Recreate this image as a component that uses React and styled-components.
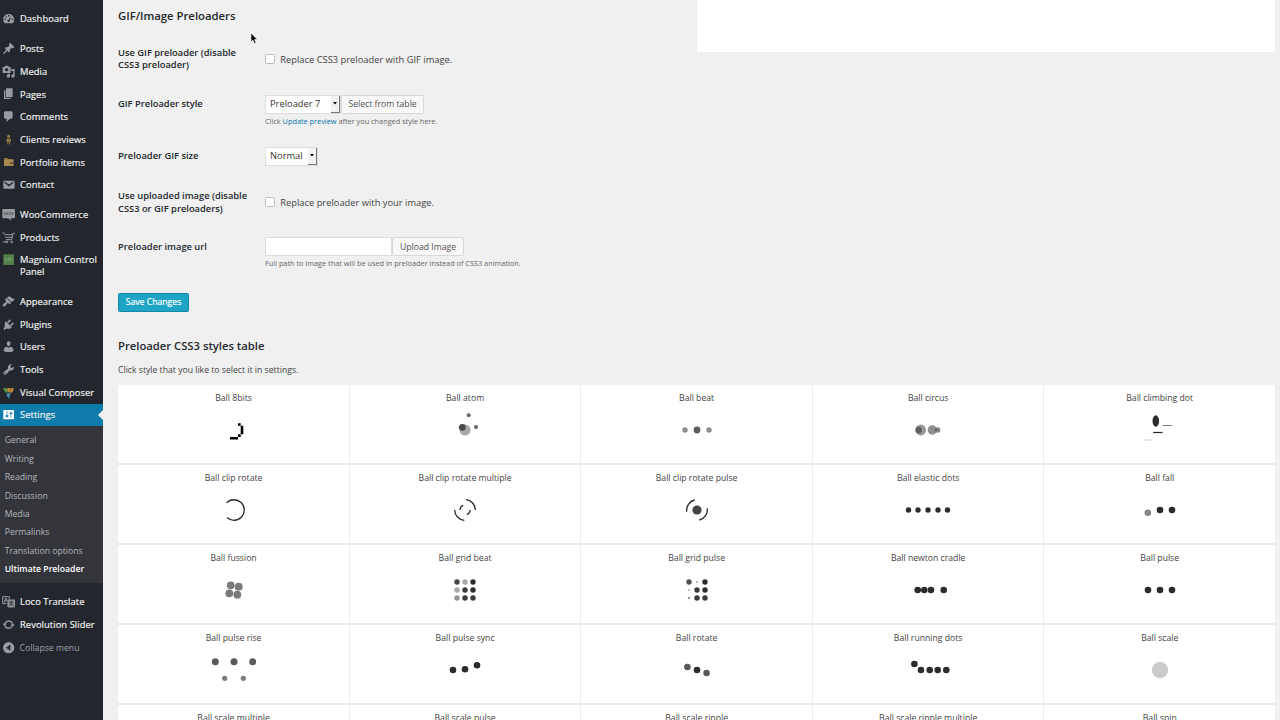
import React from "react";
import styled, { createGlobalStyle } from "styled-components";

const GlobalStyle = createGlobalStyle`
  * {
    box-sizing: border-box;
  }
  body {
    margin: 0;
    background-color: #f0f0f0;
    font-family: "Open Sans", "Liberation Sans", sans-serif;
    color: #444;
    overflow: hidden;
  }
`;

const icons = {
  dashboard:
    "M3.76 17h12.48c1.34-1.63 2.01-3.55 2.01-5.74 0-4.53-3.69-8.2-8.25-8.2s-8.25 3.67-8.25 8.2C1.75 13.45 2.42 15.37 3.76 17zM9 4.6h2v2H9zM5.3 6.3h2v2h-2zM3.5 10.2h2v2h-2zM14.5 10.2h2v2h-2zM13.9 6.2l-2.4 6.3c.4 1.6-.5 2.5-1.5 2.5s-2.1-1-1.7-2.3c.2-.7.8-1.1 1.5-1.2z",
  post: "M10.44 3.02l1.82-1.82 6.36 6.35-1.83 1.82c-1.05-.68-2.48-.57-3.41.36l-.75.75c-.92.93-1.04 2.35-.35 3.41l-1.83 1.82-2.41-2.41-2.8 2.79c-.42.42-3.38 2.71-3.8 2.29s1.86-3.39 2.28-3.81l2.79-2.79L4.1 9.36l1.83-1.82c1.05.69 2.48.57 3.4-.36l.75-.75c.93-.92 1.05-2.35.36-3.41z",
  media:
    "M13 11V4c0-.55-.45-1-1-1h-1.67L9 1H5L3.67 3H2c-.55 0-1 .45-1 1v7c0 .55.45 1 1 1h10c.55 0 1-.45 1-1zM7 4.5c1.38 0 2.5 1.12 2.5 2.5S8.38 9.5 7 9.5 4.5 8.38 4.5 7 5.62 4.5 7 4.5zM14 6h5v10.5c0 1.38-1.12 2.5-2.5 2.5S14 17.88 14 16.5s1.12-2.5 2.5-2.5c.17 0 .34.02.5.05V9h-3V6zm-4 8.05V13h2v3.5c0 1.38-1.12 2.5-2.5 2.5S7 17.88 7 16.5 8.12 14 9.5 14c.17 0 .34.02.5.05z",
  page: "M6 15V2h10v13H6zm-1 1h8v2H3V5h2v11z",
  comment:
    "M5 2h9c1.1 0 2 .9 2 2v7c0 1.1-.9 2-2 2h-2l-5 5v-5H5c-1.1 0-2-.9-2-2V4c0-1.1.9-2 2-2z",
  email:
    "M3.87 4h13.25C18.37 4 19 4.59 19 5.79v8.42c0 1.19-.63 1.79-1.88 1.79H3.87c-1.25 0-1.88-.6-1.88-1.79V5.79c0-1.2.63-1.79 1.88-1.79zm6.62 8.6l6.74-5.53c.24-.2.43-.66.13-1.07-.29-.41-.82-.42-1.17-.17l-5.7 3.86L4.8 5.83c-.35-.25-.88-.24-1.17.17-.3.41-.11.87.13 1.07z",
  appearance:
    "M14.48 11.06L7.41 3.99l1.5-1.5c.5-.56 2.3-.47 3.51.32 1.21.8 1.43 1.28 2.91 2.1 1.18.64 2.45 1.26 4.45.85zm-.71.71L6.7 4.7 4.93 6.47c-.39.39-.39 1.02 0 1.41l1.06 1.06c.39.39.39 1.03 0 1.42-.6.6-1.43 1.11-2.21 1.69-.35.26-.7.53-1.01.84C1.43 14.23.4 16.08 1.4 17.07c.99 1 2.84-.03 4.18-1.36.31-.31.58-.66.85-1.02.57-.78 1.08-1.61 1.69-2.21.39-.39 1.02-.39 1.41 0l1.06 1.06c.39.39 1.02.39 1.41 0z",
  plugins:
    "M13.11 4.36L9.87 7.6 8 5.73l3.24-3.24c.35-.34 1.05-.2 1.56.32.52.51.66 1.21.31 1.55zm-8 1.77l.91-1.12 9.01 9.01-1.19.84c-.71.71-2.63 1.16-3.82 1.16H6.14L4.9 17.26c-.59.59-1.54.59-2.12 0-.59-.58-.59-1.53 0-2.12l1.24-1.24v-3.88c0-1.13.4-3.19 1.09-3.89zm7.26 3.97l3.24-3.24c.34-.35 1.04-.21 1.55.31.52.51.66 1.21.31 1.55l-3.24 3.25z",
  users:
    "M10 9.25c-2.27 0-2.73-3.44-2.73-3.44C7 4.02 7.82 2 9.97 2c2.16 0 2.98 2.02 2.71 3.81 0 0-.41 3.44-2.68 3.44zm0 2.57L12.72 10c2.39 0 4.52 2.33 4.52 4.53v2.49s-3.65 1.13-7.24 1.13c-3.65 0-7.24-1.13-7.24-1.13v-2.49c0-2.25 1.94-4.48 4.47-4.48z",
  tools:
    "M16.68 9.77c-1.34 1.34-3.3 1.67-4.95.99l-5.41 6.52c-.99.99-2.59.99-3.58 0s-.99-2.59 0-3.57l6.52-5.42c-.68-1.65-.35-3.61.99-4.95 1.28-1.28 3.12-1.62 4.72-1.06l-2.89 2.89 2.82 2.82 2.86-2.87c.53 1.58.18 3.39-1.08 4.65zM3.81 16.21c.4.39 1.04.39 1.43 0 .4-.4.4-1.04 0-1.43-.39-.4-1.03-.4-1.43 0-.39.39-.39 1.03 0 1.43z",
  settings:
    "M18 16V4c0-.55-.45-1-1-1H3c-.55 0-1 .45-1 1v12c0 .55.45 1 1 1h14c.55 0 1-.45 1-1zM8 11h1c.55 0 1 .45 1 1s-.45 1-1 1H8v1.5c0 .28-.22.5-.5.5s-.5-.22-.5-.5V13H6c-.55 0-1-.45-1-1s.45-1 1-1h1V5.5c0-.28.22-.5.5-.5s.5.22.5.5V11zm5-2h-1c-.55 0-1-.45-1-1s.45-1 1-1h1V5.5c0-.28.22-.5.5-.5s.5.22.5.5V7h1c.55 0 1 .45 1 1s-.45 1-1 1h-1v5.5c0 .28-.22.5-.5.5s-.5-.22-.5-.5V9z",
  collapse:
    "M10 1.5a8.5 8.5 0 100 17 8.5 8.5 0 000-17zM12.6 5.2v9.6L6 10z",
};

// icons that are not a single flat shape
const drawings = {
  clients: (
    <g fill="#8f7446">
      <circle cx="10" cy="5.200" r="2.400" />
      <path d="M6.500 8.500h7v4h-1.400v4.800h-1.500v-3.500h-1.200v3.500H7.900v-4.800H6.500z" />
    </g>
  ),
  portfolio: (
    <g>
      <path d="M3 4.500h5l1.500 1.700h7V9H3z" fill="#8d7440" />
      <path d="M3 7.200h14.500v9.300H3z" fill="#a88a50" />
      <path d="M12.500 10.500h5v2.700h-5z" fill="#5c4f36" />
    </g>
  ),
  woo: (
    <g>
      <path d="M2 1.5h16a1.5 1.5 0 011.5 1.5v11a1.5 1.5 0 01-1.5 1.5h-5l1 3.5-4.5-3.5H2A1.5 1.5 0 01.5 14V3A1.5 1.5 0 012 1.5z" fill="#989b9f" />
      <path d="M3 6l1.4 4.5L6 7l1.5 3.500L8.800 6" fill="none" stroke="#5b5e63" strokeWidth="1.2" />
      <ellipse cx="11.7" cy="8.3" rx="1.4" ry="2" fill="none" stroke="#5b5e63" strokeWidth="1.2" />
      <ellipse cx="15.8" cy="8.3" rx="1.4" ry="2" fill="none" stroke="#5b5e63" strokeWidth="1.2" />
    </g>
  ),
  cart: (
    <g fill="none" stroke="#989b9f" strokeWidth="1.5">
      <path d="M.5 3h3.500M1 16.500h6M16 3.500h3.500M16.500 3.500L14.500 13H5.500M3.500 5.500H16M4.500 9.500H15" />
      <circle cx="7.500" cy="16.500" r="1.4" />
      <circle cx="14.500" cy="16.500" r="1.4" />
    </g>
  ),
  magnium: (
    <g>
      <path d="M2 2h16v16H2z" fill="#557f49" />
      <path d="M5 13V7l3 4 3-4v6M13 13V7h3" fill="none" stroke="#7fa06f" strokeWidth="1.2" />
    </g>
  ),
  composer: (
    <g>
      <path d="M1 3.5l6-.5 2 5-3 3z" fill="#568f43" />
      <path d="M8 3h4l1 4-3 3-2-3z" fill="#c08a35" />
      <path d="M13 3.5l5-.5-2 6-4 2z" fill="#c08a35" />
      <path d="M8 10l5 1-2.5 8L7 14z" fill="#3f86a7" />
    </g>
  ),
  loco: (
    <g fill="none" stroke="#989b9f" strokeWidth="1.5">
      <path d="M11 6V2.500H1V13h6" />
      <path d="M3.300 11L5.500 4.800h1L8 8.500M4.300 8.800h3" />
      <path d="M9 7.500h10v10.500H9z" fill="#85888d" />
      <path d="M10.800 10.500h6.500M14 9v1.500M16 11l-4.800 5.300M12.200 11.500l4.800 4.800" stroke="#23282d" strokeWidth="1.2" />
    </g>
  ),
  revolution: (
    <g fill="none" stroke="#989b9f" strokeWidth="2.200">
      <path d="M4.500 8A6.300 6.300 0 0115.600 7.800M15.500 12A6.300 6.300 0 014.400 12.200" />
      <path d="M.8 8.200h6.600L4 12.800zM12.600 11.800h6.600L16 7.200z" fill="#989b9f" stroke="none" />
    </g>
  ),
};

const menuGroups = [
  [{ name: "Dashboard", icon: "dashboard" }],
  [
    { name: "Posts", icon: "post" },
    { name: "Media", icon: "media" },
    { name: "Pages", icon: "page" },
    { name: "Comments", icon: "comment" },
    { name: "Clients reviews", icon: "clients" },
    { name: "Portfolio items", icon: "portfolio" },
    { name: "Contact", icon: "email" },
  ],
  [
    { name: "WooCommerce", icon: "woo" },
    { name: "Products", icon: "cart" },
    { name: "Magnium Control Panel", icon: "magnium" },
  ],
  [
    { name: "Appearance", icon: "appearance" },
    { name: "Plugins", icon: "plugins" },
    { name: "Users", icon: "users" },
    { name: "Tools", icon: "tools" },
    { name: "Visual Composer", icon: "composer" },
    {
      name: "Settings",
      icon: "settings",
      active: true,
      children: [
        "General",
        "Writing",
        "Reading",
        "Discussion",
        "Media",
        "Permalinks",
        "Translation options",
        "Ultimate Preloader",
      ],
    },
  ],
  [
    { name: "Loco Translate", icon: "loco" },
    { name: "Revolution Slider", icon: "revolution" },
  ],
];

const DARK = "#2b2b2b";

// [x, y, radius, colour] measured from the middle of the loader
const dots = (list) =>
  list.map(([x, y, r, fill = DARK], i) => (
    <circle key={i} cx={x} cy={y} r={r} fill={fill} />
  ));

const arcs = (d) => (
  <path d={d} fill="none" stroke={DARK} strokeWidth="1.35" />
);

const loaders = [
  {
    name: "Ball 8bits",
    art: (
      <path
        d="M-4 7H4V4.300H6.700V-4.300H4V-6.700H6.700V-4.300H9.300V4.300H6.700V7H4V9.500H-4z"
        fill="#000"
        fillRule="evenodd"
      />
    ),
  },
  {
    name: "Ball atom",
    art: dots([
      [0, 0, 5.5, "#a9a9a9"],
      [-2.7, -2.7, 3.4, "#4a4a4a"],
      [3.7, -14.7, 2, "#666"],
      [11, -3, 2, "#666"],
    ]),
  },
  {
    name: "Ball beat",
    art: dots([
      [-12, 0, 2.7, "#8e8e8e"],
      [0, 0, 3.4, "#5c5c5c"],
      [12, 0, 2.7, "#8e8e8e"],
    ]),
  },
  {
    name: "Ball circus",
    art: dots([
      [-7.3, 0, 5.4, "#979797"],
      [-9.3, 0, 3.2, "#5e5e5e"],
      [4.3, 0, 4.7, "#8e8e8e"],
      [9.7, 0, 2.7, "#858585"],
      [7.8, 0, 1.2, "#5e5e5e"],
    ]),
  },
  {
    name: "Ball climbing dot",
    art: (
      <g>
        <ellipse cx="-4.200" cy="-9" rx="3.300" ry="5.700" fill={DARK} />
        <path d="M-6.800 2.500h9.300" stroke="#222" strokeWidth="1.2" />
        <path d="M2.800 -4.500h9" stroke="#777" strokeWidth="1" />
        <path d="M-15.500 10h8" stroke="#d5d5d5" strokeWidth="1.2" />
      </g>
    ),
  },
  {
    name: "Ball clip rotate",
    art: arcs("M-7.400 -7.200A10.300 10.300 0 1 1 -7 7.600"),
  },
  {
    name: "Ball clip rotate multiple",
    art: arcs(
      "M1 -10.300A10.300 10.300 0 0 1 10.300 0M-10.300 0A10.300 10.300 0 0 0 -.7 10.300M-5 0A5 5 0 0 1 -1.700 -4.700M5 0A5 5 0 0 1 1.700 4.700"
    ),
  },
  {
    name: "Ball clip rotate pulse",
    art: (
      <g>
        {arcs(
          "M-10.200 1.700A10.300 10.300 0 0 1 -2.300 -10M10.200 -1.700A10.300 10.300 0 0 1 2.300 10"
        )}
        {dots([[0, 0, 4.6, "#444"]])}
      </g>
    ),
  },
  {
    name: "Ball elastic dots",
    art: dots([-19.5, -10, 0, 10, 19.5].map((x) => [x, 0, 2.7])),
  },
  {
    name: "Ball fall",
    art: dots([
      [-12.2, 2.7, 3.3, "#858585"],
      [0, 0, 3.3],
      [12, 0, 3.3],
    ]),
  },
  {
    name: "Ball fussion",
    art: dots([
      [-3.3, -4.7, 3.9, "#7b7b7b"],
      [4.7, -3.3, 3.9, "#7b7b7b"],
      [-4.7, 3.3, 3.9, "#7b7b7b"],
      [3.3, 4.7, 3.9, "#7b7b7b"],
    ]),
  },
  {
    name: "Ball grid beat",
    art: dots([
      [-8, -8, 2.7, "#444"],
      [0, -8, 2.7, "#a8a8a8"],
      [8, -8, 2.7],
      [-8, 0, 2.7, "#a8a8a8"],
      [0, 0, 2.7, "#3a3a3a"],
      [8, 0, 2.7],
      [-8, 8, 2.7, "#959595"],
      [0, 8, 2.7, "#3a3a3a"],
      [8, 8, 2.7, "#3a3a3a"],
    ]),
  },
  {
    name: "Ball grid pulse",
    art: dots([
      [-8, -8, 2.7, "#505050"],
      [0, -8, 1.1, "#aaa"],
      [8, -8, 2.7],
      [-8, 0, 1.1, "#aaa"],
      [0, 0, 2.7, "#3a3a3a"],
      [8, 0, 2.7],
      [-8, 8, 1.3, "#999"],
      [0, 8, 2.7, "#3a3a3a"],
      [8, 8, 2.7, "#3a3a3a"],
    ]),
  },
  {
    name: "Ball newton cradle",
    art: dots([-10.3, -3.7, 3, 15.7].map((x) => [x, 0, 3.3])),
  },
  {
    name: "Ball pulse",
    art: dots([-12, 0, 12].map((x) => [x, 0, 3.3])),
  },
  {
    name: "Ball pulse rise",
    art: dots([
      [-18.7, -8.3, 3.5, "#5a5a5a"],
      [0, -8.3, 3.5, "#5a5a5a"],
      [18.7, -8.3, 3.5, "#5a5a5a"],
      [-9.3, 8.3, 2.6, "#7b7b7b"],
      [9.3, 8.3, 2.6, "#7b7b7b"],
    ]),
  },
  {
    name: "Ball pulse sync",
    art: dots([
      [-12, 0, 3.3],
      [0, -0.7, 3.3],
      [12, -4.7, 3.3],
    ]),
  },
  {
    name: "Ball rotate",
    art: dots([
      [-9.6, -3, 3.3, "#5a5a5a"],
      [0, 0, 3.3],
      [9.6, 3, 3.3, "#5a5a5a"],
    ]),
  },
  {
    name: "Ball running dots",
    art: dots([
      [-13.6, -6, 3.3],
      [-7, 0, 3.3],
      [1.7, 0, 3.3],
      [9.7, 0, 3.3],
      [18.3, 0, 3.3],
    ]),
  },
  { name: "Ball scale", art: dots([[0, 0, 8.2, "#cbcbcb"]]) },
  { name: "Ball scale multiple" },
  { name: "Ball scale pulse" },
  { name: "Ball scale ripple" },
  { name: "Ball scale ripple multiple" },
  { name: "Ball spin" },
];

function MenuIcon({ icon }) {
  return (
    <IconSvg viewBox="0 0 20 20">
      {drawings[icon] || <path d={icons[icon]} fillRule="evenodd" />}
    </IconSvg>
  );
}

function Sidebar() {
  return (
    <Menu>
      {menuGroups.map((group, i) => (
        <MenuGroup key={i}>
          {group.map((item) => (
            <li key={item.name}>
              <MenuLink $active={item.active}>
                <MenuIcon icon={item.icon} />
                <span>{item.name}</span>
              </MenuLink>
              {item.children && (
                <SubMenu>
                  {item.children.map((name) => (
                    <SubItem key={name} $current={name === "Ultimate Preloader"}>
                      {name}
                    </SubItem>
                  ))}
                </SubMenu>
              )}
            </li>
          ))}
        </MenuGroup>
      ))}
      <Collapse>
        <MenuIcon icon="collapse" />
        <span>Collapse menu</span>
      </Collapse>
    </Menu>
  );
}

function Select({ value, width }) {
  return (
    <SelectBox $width={width}>
      <span>{value}</span>
      <SelectArrow>
        <svg width="4" height="3" viewBox="0 0 4 3">
          <path d="M0 0h4L2 2.500z" />
        </svg>
      </SelectArrow>
    </SelectBox>
  );
}

export default function App() {
  return (
    <Page>
      <GlobalStyle />
      <Sidebar />
      <Content>
        <Top>
          <Form>
            <Heading>GIF/Image Preloaders</Heading>
            <FormRow $height={51.4}>
              <Label>
                Use GIF preloader (disable
                <br />
                CSS3 preloader)
              </Label>
              <Field $top={19.4}>
                <CheckLabel>
                  <Checkbox />
                  Replace CSS3 preloader with GIF image.
                </CheckLabel>
              </Field>
            </FormRow>
            <FormRow $height={52.1}>
              <Label>GIF Preloader style</Label>
              <Field $top={10}>
                <Controls>
                  <Select value="Preloader 7" width={76} />
                  <Button $width={82.5}>Select from table</Button>
                </Controls>
                <Description>
                  Click <a>Update preview</a> after you changed style here.
                </Description>
              </Field>
            </FormRow>
            <FormRow $height={40}>
              <Label>Preloader GIF size</Label>
              <Field $top={10}>
                <Select value="Normal" width={53} />
              </Field>
            </FormRow>
            <FormRow $height={50.5}>
              <Label>
                Use uploaded image (disable
                <br />
                CSS3 or GIF preloaders)
              </Label>
              <Field $top={18.8}>
                <CheckLabel>
                  <Checkbox />
                  Replace preloader with your image.
                </CheckLabel>
              </Field>
            </FormRow>
            <FormRow $height={65}>
              <Label>Preloader image url</Label>
              <Field $top={9.7}>
                <Controls>
                  <TextInput />
                  <Button $width={71.5}>Upload Image</Button>
                </Controls>
                <Description>
                  Full path to image that will be used in preloader instead of
                  CSS3 animation.
                </Description>
              </Field>
            </FormRow>
            <SaveButton>Save Changes</SaveButton>
          </Form>
          <Preview />
        </Top>
        <TableHeading>Preloader CSS3 styles table</TableHeading>
        <Hint>Click style that you like to select it in settings.</Hint>
        <Grid>
          {loaders.map((loader) => (
            <Cell key={loader.name}>
              <CellTitle>{loader.name}</CellTitle>
              <LoaderSvg viewBox="-32 -24 64 48">{loader.art}</LoaderSvg>
            </Cell>
          ))}
        </Grid>
      </Content>
      <Cursor viewBox="0 0 8 13">
        <path
          d="M1 1v9l2-1.900 1.500 3.400 1.500-.7L4.600 7.600h2.600z"
          fill="#000"
          stroke="#fff"
          strokeWidth=".6"
        />
      </Cursor>
    </Page>
  );
}

const Page = styled.div`
  display: flex;
  height: 720px;
  overflow: hidden;
`;

const Menu = styled.nav`
  flex: 0 0 103px;
  display: flex;
  flex-direction: column;
  gap: 7.2px;
  padding-top: 7.6px;
  background-color: #23262c;
`;

const MenuGroup = styled.ul`
  margin: 0;
  padding: 0;
  list-style: none;
`;

const IconSvg = styled.svg`
  flex: none;
  width: 13.3px;
  height: 13.3px;
  fill: #989b9f;
`;

const MenuLink = styled.a`
  position: relative;
  display: flex;
  gap: 5.2px;
  min-height: 22.67px;
  padding: 4.7px 0 4.6px 1.5px;
  font-size: 9.33px;
  font-weight: 500;
  line-height: 12.1px;
  letter-spacing: 0.08px;
  -webkit-text-stroke: 0.2px;
  color: #eee;
  background-color: ${({ $active }) => ($active ? "#0d7cab" : "transparent")};
  span {
    padding-top: 1.1px;
  }
  svg {
    ${({ $active }) => $active && "fill: #fff;"}
  }
  &::after {
    content: "";
    display: ${({ $active }) => ($active ? "block" : "none")};
    position: absolute;
    right: 0;
    top: 6px;
    border: 5.3px solid transparent;
    border-right-color: #f0f0f0;
    border-left: none;
  }
`;

const SubMenu = styled.ul`
  margin: 0;
  padding: 5.2px 0 4.5px;
  list-style: none;
  background-color: #33353b;
`;

const SubItem = styled.li`
  padding-left: 4.7px;
  font-size: 8.67px;
  line-height: 18.4px;
  font-weight: ${({ $current }) => ($current ? 600 : 400)};
  color: ${({ $current }) => ($current ? "#fff" : "#b4b6b9")};
`;

const Collapse = styled.div`
  display: flex;
  align-items: center;
  gap: 4.8px;
  margin-top: -4.2px;
  padding-left: 1.5px;
  font-size: 8.67px;
  line-height: 18px;
  color: #9da0a4;
`;

const Content = styled.main`
  flex: 1;
  min-width: 0;
  padding: 0 5px 0 15px;
`;

const Top = styled.div`
  display: flex;
  justify-content: space-between;
  height: 312px;
`;

const Form = styled.div`
  width: 560px;
`;

const Preview = styled.div`
  width: 578px;
  height: 52px;
  background-color: #fff;
`;

const Heading = styled.h3`
  margin: 0;
  height: 33.6px;
  padding-top: 8.4px;
  font-size: 11.3px;
  font-weight: 600;
  line-height: 16px;
  color: #23282d;
`;

const FormRow = styled.div`
  display: flex;
  height: ${({ $height }) => $height}px;
`;

const Label = styled.div`
  flex: 0 0 147px;
  padding-top: 13.4px;
  font-size: 9.33px;
  font-weight: 600;
  line-height: 12.1px;
  color: #23282d;
`;

const Field = styled.div`
  padding-top: ${({ $top }) => $top}px;
`;

const CheckLabel = styled.label`
  display: flex;
  align-items: center;
  gap: 5px;
  font-size: 9.33px;
  line-height: 13px;
`;

const Checkbox = styled.span`
  width: 10.3px;
  height: 10px;
  border: 1px solid #bbb;
  border-radius: 1.5px;
  background-color: #fff;
`;

const Controls = styled.div`
  display: flex;
  align-items: center;
  gap: 0.3px;
`;

const SelectBox = styled.div`
  display: flex;
  align-items: center;
  justify-content: space-between;
  width: ${({ $width }) => $width}px;
  height: 18.5px;
  padding-left: 4px;
  border: 1px solid #ddd;
  background-color: #fff;
  font-size: 9.33px;
  line-height: 16px;
  color: #333;
`;

const SelectArrow = styled.span`
  display: flex;
  align-items: center;
  justify-content: center;
  width: 9px;
  height: 16.5px;
  border-right: 1px solid #777;
  border-bottom: 1px solid #777;
  background-color: #f2f2f2;
`;

const Button = styled.button`
  width: ${({ $width }) => $width}px;
  height: 19px;
  padding: 0;
  border: 1px solid #d8d8d8;
  border-radius: 1.5px;
  background-color: #f7f7f7;
  font-family: inherit;
  font-size: 8.67px;
  line-height: 16px;
  white-space: nowrap;
  color: #555;
`;

const TextInput = styled.input`
  width: 127px;
  height: 19px;
  border: 1px solid #ddd;
  background-color: #fff;
`;

const Description = styled.p`
  margin: 2.2px 0 0;
  font-size: 7.33px;
  line-height: 11px;
  white-space: nowrap;
  color: #666;
  a {
    color: #0073aa;
  }
`;

const SaveButton = styled.button`
  display: block;
  width: 71px;
  height: 19px;
  padding: 0;
  border: 1px solid #1286a2;
  border-radius: 1.5px;
  background-color: #1ea5c5;
  font-family: inherit;
  font-size: 8.67px;
  font-weight: 500;
  line-height: 16px;
  -webkit-text-stroke: 0.2px;
  color: #fff;
`;

const TableHeading = styled.h3`
  margin: 0;
  padding-top: 26px;
  font-size: 11.25px;
  font-weight: 600;
  line-height: 16px;
  color: #23282d;
`;

const Hint = styled.p`
  margin: 0;
  height: 30.6px;
  padding-top: 10px;
  font-size: 8.67px;
  line-height: 13px;
`;

const Grid = styled.div`
  display: grid;
  grid-template-columns: repeat(5, 1fr);
  grid-auto-rows: 78.5px;
  gap: 1.5px 1px;
  margin-left: 0.3px;
  background-color: #ebebeb;
`;

const Cell = styled.div`
  display: flex;
  flex-direction: column;
  align-items: center;
  background-color: #fff;
`;

const CellTitle = styled.div`
  height: 21.4px;
  padding-top: 7.6px;
  font-size: 8.67px;
  line-height: 13px;
`;

const LoaderSvg = styled.svg`
  width: 64px;
  height: 48px;
`;

const Cursor = styled.svg`
  position: absolute;
  left: 249.5px;
  top: 31.5px;
  width: 8px;
  height: 13px;
`;
